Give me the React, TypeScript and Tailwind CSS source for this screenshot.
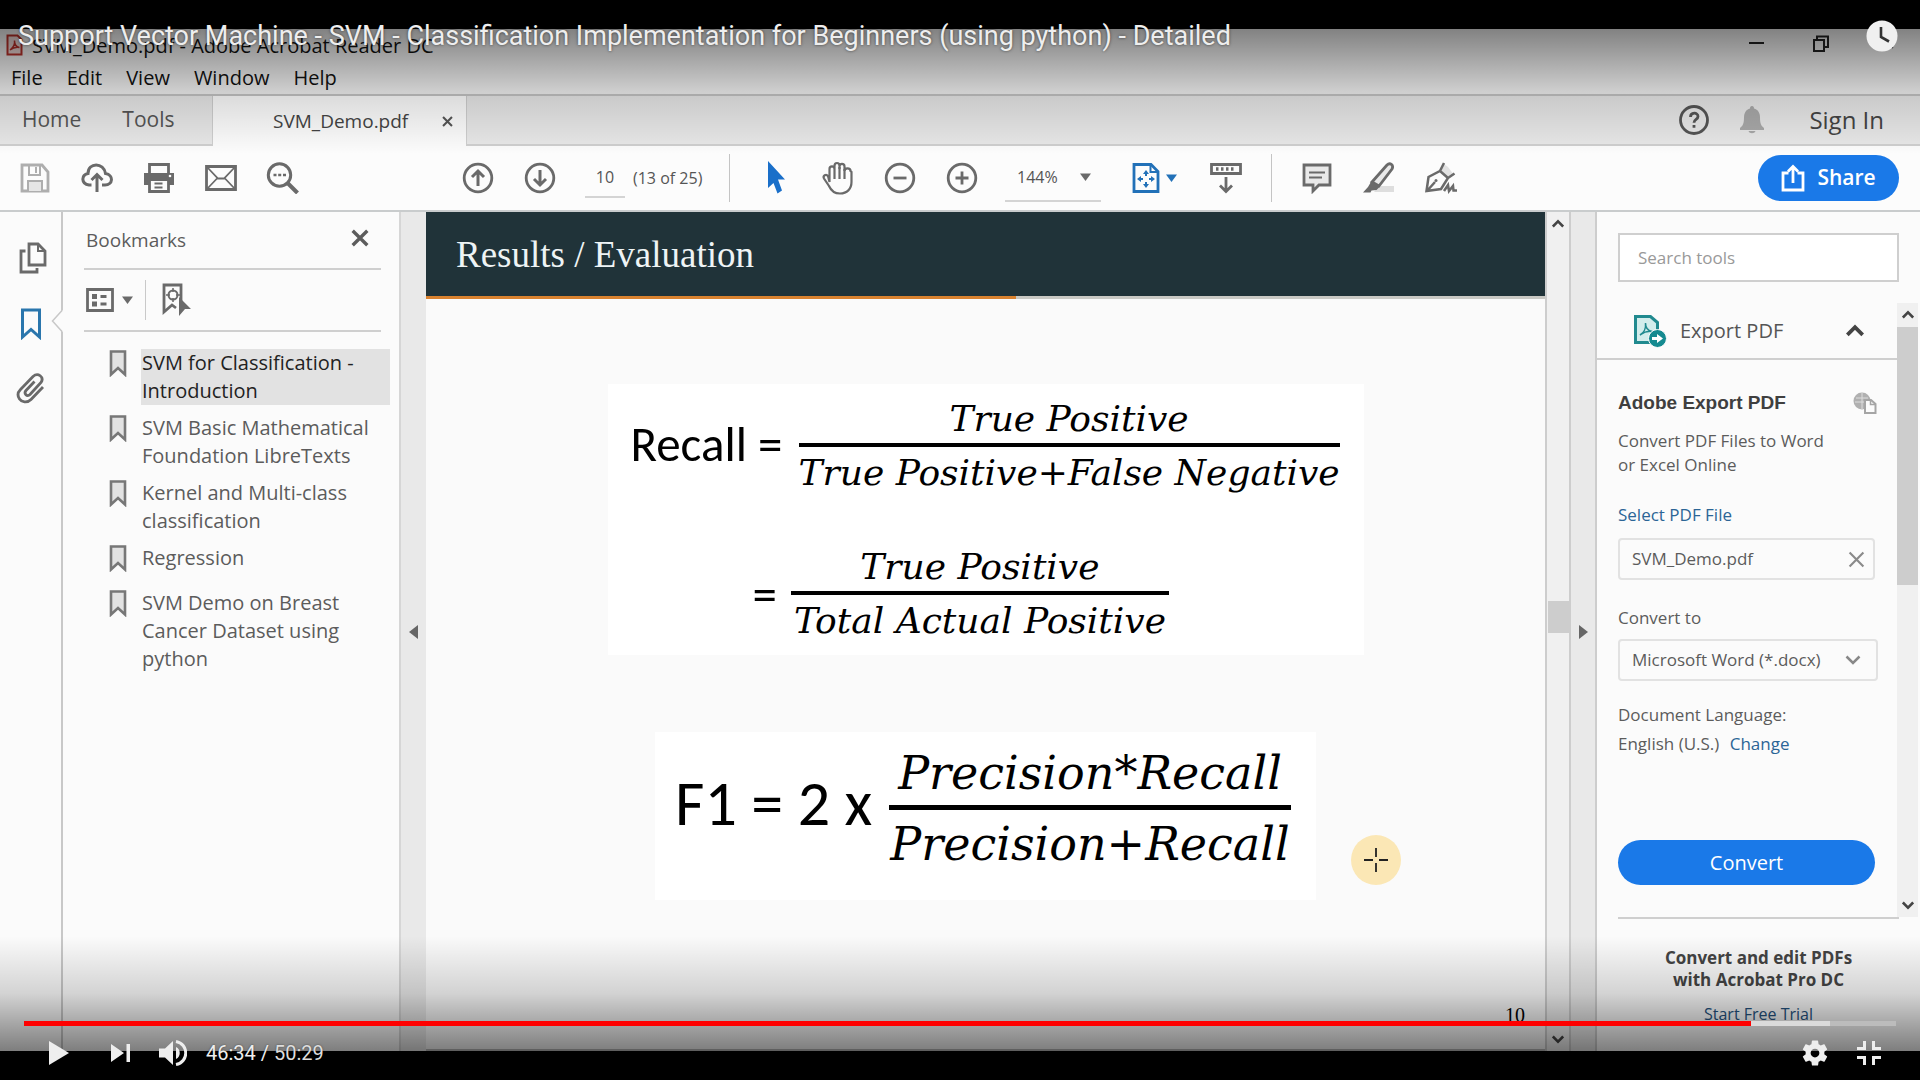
import React from "react";

type IconProps = { children: React.ReactNode; w?: number; h?: number; label?: string };

const Svg = ({ children, w = 30, h = 30 }: IconProps) => (
  <svg
    width={w}
    height={h}
    viewBox={`0 0 ${w} ${h}`}
    fill="none"
    stroke="currentColor"
    strokeWidth="2.8"
    className="shrink-0"
    aria-hidden="true"
  >
    {children}
  </svg>
);

const Tool = ({ children, label }: { children: React.ReactNode; label: string }) => (
  <button aria-label={label} className="flex h-12 w-[62px] shrink-0 items-center justify-center">
    {children}
  </button>
);

const Caret = () => (
  <svg width="11" height="8" viewBox="0 0 11 8" className="shrink-0" fill="currentColor" aria-hidden="true">
    <path d="M0 0.5h11L5.500 8z" />
  </svg>
);

const Chevron = ({ down = false, size = 14 }: { down?: boolean; size?: number }) => (
  <svg
    width={size}
    height={size}
    viewBox="0 0 14 12"
    fill="none"
    stroke="currentColor"
    strokeWidth="3"
    className="shrink-0"
    aria-hidden="true"
  >
    <path d={down ? "M1 3l6 6 6-6" : "M1 9l6-6 6 6"} />
  </svg>
);

const Cross = ({ size = 16, weight = 3 }: { size?: number; weight?: number }) => (
  <svg width={size} height={size} viewBox="0 0 16 16" stroke="currentColor" strokeWidth={weight} aria-hidden="true">
    <path d="M1.500 1.500l13 13M14.500 1.500l-13 13" />
  </svg>
);

const menus = ["File", "Edit", "View", "Window", "Help"];

const bookmarks = [
  { text: "SVM for Classification - Introduction", active: true },
  { text: "SVM Basic Mathematical Foundation LibreTexts" },
  { text: "Kernel and Multi-class classification" },
  { text: "Regression" },
  { text: "SVM Demo on Breast Cancer Dataset using python" },
];

function TitleBar() {
  return (
    <div className="bg-[#f0f0f0] text-[#111]">
      <div className="flex h-8 items-center pl-[6px]">
        <svg width="17" height="22" viewBox="0 0 17 22" fill="none" stroke="#b5302a" strokeWidth="2" aria-hidden="true">
          <path d="M1.500 1.500h10l4 4v15h-14z" fill="#e9d3d1" />
          <path d="M4 16c3-2 5-6 4.500-9.500 0 4 2 6.500 5 7-3-.5-7 .5-9.500 2.500z" strokeWidth="1.500" />
        </svg>
        <span className="ml-[9px] pt-[2px] text-[20px] leading-8">SVM_Demo.pdf - Adobe Acrobat Reader DC</span>
        <div className="ml-auto flex items-center gap-[49px] pr-[22px] pb-[4px]">
          <button aria-label="Minimize" className="h-[2px] w-[15px] bg-[#222]" />
          <button aria-label="Restore">
            <svg width="16" height="17" viewBox="0 0 16 17" fill="none" stroke="#222" strokeWidth="2" aria-hidden="true">
              <path d="M1 5h10v11H1zM4 5V1.500h11V12h-4" />
            </svg>
          </button>
          <button aria-label="Close" className="flex w-5 justify-center">
            <Cross size={12} weight={2} />
          </button>
        </div>
      </div>
      <nav className="flex h-[33px] items-center gap-6 pl-[11px] text-[20px] leading-8">
        {menus.map((m) => (
          <button key={m}>{m}</button>
        ))}
      </nav>
    </div>
  );
}

function Tabs() {
  return (
    <div className="flex h-[52px] items-stretch border-t-2 border-[#c4c4c4] bg-[#e8e8e8] text-[21px] text-[#555]">
      <div className="flex w-[213px] items-center gap-[41px] border-r border-b-2 border-[#cfcfcf] pl-[22px]">
        <button>Home</button>
        <button>Tools</button>
      </div>
      <div className="flex w-[253px] items-center bg-[#fcfcfc] pl-[60px]">
        <button className="w-[134px] text-[19px] text-[#444]">SVM_Demo.pdf</button>
        <button aria-label="Close tab" className="ml-[35px] text-[#555]">
          <Cross size={11} />
        </button>
      </div>
      <div className="flex flex-1 items-center justify-end border-b-2 border-l border-[#cfcfcf] pr-[36px]">
        <button aria-label="Help">
          <Svg w={32} h={32}>
            <circle cx="16" cy="16" r="13.500" />
            <path d="M12.500 13c0-5 7.500-5 7.500-.5 0 3-4 2.800-4 6.200M16 21v2.800" />
          </Svg>
        </button>
        <button aria-label="Notifications" className="ml-[29px] text-[#a9a9a9]">
          <svg width="26" height="28" viewBox="0 0 26 28" fill="currentColor" aria-hidden="true">
            <path d="M13 0c1.500 0 2 1 2 2.500 4 1 6 4.500 6 9 0 6 1 8 4 10.500V24H1v-2c3-2.500 4-4.500 4-10.500 0-4.500 2-8 6-9C11 1 11.500 0 13 0zM9.500 25h7c-1 3-6 3-7 0z" />
          </svg>
        </button>
        <button className="ml-[44px] text-[24px] text-[#444]">Sign In</button>
      </div>
    </div>
  );
}

function Toolbar() {
  return (
    <div className="flex h-[66px] items-center border-b-2 border-[#c9cccd] bg-[#fcfcfc] pr-[21px] pl-1 text-[#6a6a6a]">
      <div className="flex">
        <button
          aria-label="Save"
          className="flex h-12 w-[62px] shrink-0 items-center justify-center text-[#aeaeae]"
        >
          <Svg>
            <path d="M2 2h20l6 7v19H2z" />
            <path d="M9 2v10h11V2M16 4v6" strokeWidth="2" />
            <path d="M8 28V18h14v10" fill="#e6e6e6" strokeWidth="2" />
          </Svg>
        </button>
        <Tool label="Upload to cloud">
          <Svg w={32} h={32}>
            <path d="M10.500 23H8c-8-1-8-10-1-11.500C7 0 23 0 24.500 11.500 33 13 32 23 24 23h-3" strokeWidth="3" />
            <path d="M16 30V13M10.500 18l5.500-5.500 5.500 5.500" strokeWidth="3" />
          </Svg>
        </Tool>
        <Tool label="Print">
          <Svg w={32} h={30}>
            <path d="M6.500 11V1.500h19V11" />
            <path d="M1 10h30v12H1z" fill="currentColor" stroke="none" />
            <path d="M6.500 16.500h19v12h-19z" fill="#fcfcfc" />
            <path d="M11.500 20.500h8M11.500 24.500h8" strokeWidth="2" />
            <circle cx="27" cy="13" r="1.300" fill="#fff" stroke="none" />
          </Svg>
        </Tool>
        <Tool label="Email">
          <Svg w={32} h={26}>
            <path d="M1.500 1.500h29v23h-29z" />
            <path d="M2 2l11 11.500h6L30 2M2 24l10-10.500M30 24L20 13.500" strokeWidth="1.800" />
          </Svg>
        </Tool>
        <Tool label="Find">
          <Svg w={34} h={32}>
            <circle cx="13.500" cy="13" r="11.200" strokeWidth="3" />
            <path d="M21.500 21l10 10" strokeWidth="4" />
            <path d="M7.500 13h3M12.200 13h3M17 13h3" strokeWidth="2.600" />
          </Svg>
        </Tool>
      </div>
      <div className="ml-[133px] flex">
        <Tool label="Previous page">
          <Svg w={32} h={32}>
            <circle cx="16" cy="16" r="13.800" />
            <path d="M16 24V9M10 15l6-6 6 6" strokeWidth="3" />
          </Svg>
        </Tool>
        <Tool label="Next page">
          <Svg w={32} h={32}>
            <circle cx="16" cy="16" r="13.800" />
            <path d="M16 8v15M10 17l6 6 6-6" strokeWidth="3" />
          </Svg>
        </Tool>
      </div>
      <div className="ml-[14px] flex items-center text-[16px] text-[#555]">
        <input
          aria-label="Page number"
          defaultValue="10"
          className="h-10 w-10 border-b-2 border-[#d4d4d4] bg-transparent text-center outline-none"
        />
        <span className="ml-2 w-[70px] whitespace-nowrap">(13 of 25)</span>
      </div>
      <div className="ml-[26px] h-12 w-px shrink-0 bg-[#c4c4c4]" />
      <div className="ml-[15px] flex">
        <Tool label="Select">
          <svg width="20" height="34" viewBox="0 0 20 34" aria-hidden="true">
            <path d="M2 0l17 18.500h-7l4 11-4.500 3-4-10.500L2 27z" fill="#1a6fc9" />
          </svg>
        </Tool>
        <Tool label="Pan">
          <Svg w={34} h={34}>
            <path
              d="M8.500 21V8c0-3.500 5-3.500 5 0V5c0-4 5-4 5 0v3-2.500c0-3.500 5-3.500 5 0V10c0-3.500 6-3.500 6 0l1 1v10c0 7-4.500 11.500-11.500 11.500-6 0-9-3-11-7.500L3 17.500c-1.500-3 2-5 4-2.500z"
              strokeWidth="2.200"
            />
            <path d="M13.500 8v10M18.500 6v12M23.500 8v10" strokeWidth="2.200" />
          </Svg>
        </Tool>
        <Tool label="Zoom out">
          <Svg w={32} h={32}>
            <circle cx="16" cy="16" r="13.800" />
            <path d="M9.500 16h13" />
          </Svg>
        </Tool>
        <Tool label="Zoom in">
          <Svg w={32} h={32}>
            <circle cx="16" cy="16" r="13.800" />
            <path d="M9.500 16h13M16 9.500v13" />
          </Svg>
        </Tool>
      </div>
      <button className="ml-3 flex h-12 w-24 items-center border-b-2 border-[#d4d4d4] pl-3 text-[16px] text-[#555]">
        144%
        <span className="ml-auto pr-[10px] text-[#6a6a6a]">
          <Caret />
        </span>
      </button>
      <button aria-label="Fit page" className="ml-[31px] flex items-center gap-[6px] text-[#2271b8]">
        <Svg w={28} h={30}>
          <path d="M2 1.500h17l7 7v20H2z" />
          <path d="M18.500 2v7H26" strokeWidth="2" />
          <path d="M14 9v4M14 19v4M7 16h4M17 16h4" strokeWidth="2" />
          <path d="M14 7l3 4h-6zM14 25l3-4h-6zM5 16l4-3v6zM23 16l-4-3v6z" fill="currentColor" stroke="none" />
        </Svg>
        <Caret />
      </button>
      <div className="ml-[18px] flex">
        <Tool label="Scrolling">
          <Svg w={32} h={32}>
            <path d="M1.500 2.500h29v9h-29z" />
            <path d="M6 7h2.500M11 7h2.500M16 7h2.500M21 7h2.500" strokeWidth="3.500" />
            <path d="M16 15v14M10 23.500l6 6 6-6" />
          </Svg>
        </Tool>
      </div>
      <div className="ml-[14px] h-12 w-px shrink-0 bg-[#c4c4c4]" />
      <div className="ml-[14px] flex">
        <Tool label="Comment">
          <Svg w={30} h={32}>
            <path d="M2 3h26v20H17l-6 6v-6H2z" fill="#e9e9e9" />
            <path d="M7 10.500h16M7 15.500h13" strokeWidth="2" />
          </Svg>
        </Tool>
        <Tool label="Highlight">
          <Svg w={32} h={32}>
            <path d="M11 30h20v-6H16z" fill="#dedede" stroke="none" />
            <path d="M9 20L24 3c3-3 7 0 5 4L16 24z" fill="#e9e9e9" />
            <path d="M8.500 19l8 6-3 3-5 .500-1 2H0l5-5.500z" fill="currentColor" stroke="none" />
          </Svg>
        </Tool>
        <Tool label="Sign">
          <Svg w={34} h={32}>
            <path d="M20 2l-3 7 7 8 6-4-6-8z" fill="#e2e2e2" stroke="none" />
            <path d="M2.500 29L4.500 15 16 9l8 7-7 11zM3 29l8-9M20 1l-4 8 8 7 6.500-4.500" strokeWidth="2.500" />
            <circle cx="12" cy="18.500" r="1.500" fill="currentColor" stroke="none" />
            <path d="M20 29l4-6 1 6 4-5 .500 4.500H33" strokeWidth="2.500" />
          </Svg>
        </Tool>
      </div>
      <button className="ml-auto flex h-[46px] w-[141px] items-center justify-center gap-3 rounded-full bg-[#1a79e8] text-[21px] font-semibold text-white">
        <Svg w={24} h={28}>
          <path d="M7.500 9H2v17h20V9h-5.500M12 19V3M7 7.500l5-5 5 5" />
        </Svg>
        Share
      </button>
    </div>
  );
}

function BookmarkPanel() {
  return (
    <>
      <div className="relative flex w-[63px] shrink-0 flex-col items-start gap-8 border-r-2 border-[#c8c8c8] bg-[#fbfbfb] pt-[30px] pl-4 text-[#6a6a6a]">
        <button aria-label="Page thumbnails" className="ml-[3px]">
          <Svg w={28} h={32}>
            <path d="M10 2h9l7 7v14H10z" />
            <path d="M19 2v7h7" strokeWidth="2" />
            <path d="M6.500 9H2v21h16v-4" />
          </Svg>
        </button>
        <button aria-label="Bookmarks" className="ml-1 text-[#2a76ad]">
          <Svg w={22} h={34}>
            <path d="M2.500 4h17v27L11 23.500 2.500 31z" strokeWidth="3" />
          </Svg>
        </button>
        <button aria-label="Attachments">
          <Svg w={30} h={32}>
            <path d="M27 15L15 27.500c-4 4-9.500 2.500-11.500-.5s-2-6.500 1-9.500L17 4.500c5-4.500 11.500.5 8 6L14 22.500c-3 3-6.500-1-4-4l8.500-9" />
          </Svg>
        </button>
        <svg width="12" height="22" viewBox="0 0 12 22" className="absolute top-[98px] -right-[2px]" aria-hidden="true">
          <path d="M12 0L1.500 11 12 22z" fill="#fbfbfb" />
          <path d="M11 0.500L1.500 11 11 21.500" fill="none" stroke="#c8c8c8" strokeWidth="1.500" />
        </svg>
      </div>
      <aside className="w-[336px] shrink-0 bg-[#fbfbfb] pr-[18px] pl-[21px] text-[#5c5c5c]">
        <div className="flex h-[58px] items-center justify-between border-b-2 border-[#cfcfcf] pr-3 pl-[2px]">
          <h2 className="text-[19px]">Bookmarks</h2>
          <button aria-label="Close bookmarks" className="pb-1">
            <Cross size={18} />
          </button>
        </div>
        <div className="flex h-[62px] items-center border-b-2 border-[#cfcfcf] pl-[2px] text-[#6a6a6a]">
          <button aria-label="Options" className="flex items-center gap-2">
            <Svg w={28} h={24}>
              <path d="M1.500 1.500h25v21h-25z" />
              <path d="M14.500 8.500h6M14.500 16h6" />
              <path d="M6 8.500h5M6 16h5" strokeWidth="5" />
            </Svg>
            <Caret />
          </button>
          <div className="ml-3 h-10 w-px bg-[#c9c9c9]" />
          <button aria-label="Find current bookmark" className="ml-4">
            <Svg w={30} h={34}>
              <path d="M19 20V2H2v27l8-7 4 3" />
              <circle cx="11" cy="12" r="4.500" strokeWidth="2" />
              <path d="M11 5v4M11 15v4M4 12h4M14 12h4" strokeWidth="1.500" />
              <path d="M17 14l12 12h-6l-6 7z" fill="currentColor" stroke="none" />
            </Svg>
          </button>
        </div>
        <ul className="-mr-[9px] flex flex-col gap-[9px] pt-[17px] pl-[25px] text-[20px] leading-7">
          {bookmarks.map((b) => (
            <li key={b.text} className="flex min-h-9 items-start gap-[14px]">
              <svg
                width="18"
                height="28"
                viewBox="0 0 18 28"
                fill="#e2e2e2"
                stroke="#777"
                strokeWidth="2.600"
                className="shrink-0"
                aria-hidden="true"
              >
                <path d="M2 2.500h14v23l-7-6.500-7 6.500z" />
              </svg>
              <a
                href="#page"
                className={b.active ? "flex-1 bg-[#e2e2e2] pr-[14px] pl-[1px] text-[#222]" : "flex-1 pr-[14px] pl-[1px]"}
              >
                {b.text}
              </a>
            </li>
          ))}
        </ul>
      </aside>
    </>
  );
}

const Fraction = ({ top, bottom, large = false }: { top: string; bottom: string; large?: boolean }) => (
  <div
    className={
      large
        ? "flex w-[402px] flex-col items-center font-['DejaVu_Serif',serif] text-[46px] leading-[56px] whitespace-nowrap italic"
        : "flex min-w-[378px] flex-col items-center font-['DejaVu_Serif',serif] text-[36px] leading-[48px] whitespace-nowrap italic"
    }
  >
    <span>{top}</span>
    <span className={large ? "mt-1 mb-[6px] h-[5px] w-full bg-black" : "mb-[2px] h-1 w-full bg-black"} />
    <span>{bottom}</span>
  </div>
);

function Slide() {
  return (
    <main className="relative flex min-w-0 flex-1 flex-col items-center border-b-2 border-[#bbb] bg-[#fafafa] text-black">
      <header className="w-full">
        <h1 className="flex h-[84px] items-center bg-[#203339] pt-[2px] pl-[30px] font-['Liberation_Serif',serif] text-[37px] text-[#eef4f5]">
          Results / Evaluation
        </h1>
        <div className="h-[3px] bg-[#c9c9c4]">
          <div className="h-full w-[590px] bg-[#d9822f]" />
        </div>
      </header>
      <section className="mt-[85px] flex h-[271px] w-[756px] shrink-0 flex-col gap-[46px] bg-white pt-[11px] pl-[23px] font-[Calibri,Carlito,Lato,sans-serif] text-[49px] leading-[48px]">
        <div className="flex items-center gap-[14px]">
          <span className="w-[154px] pb-1 whitespace-nowrap">Recall =</span>
          <Fraction top="True Positive" bottom="True Positive+False Negative" />
        </div>
        <div className="flex items-center gap-[14px] pl-[122px]">
          <span>=</span>
          <Fraction top="True Positive" bottom="Total Actual Positive" />
        </div>
      </section>
      <section className="mt-[77px] flex h-[168px] w-[661px] shrink-0 items-start gap-[11px] bg-white pt-[13px] pl-[20px] font-[Calibri,Carlito,Lato,sans-serif] text-[64px]">
        <span className="w-[203px] pt-[6px] leading-[105px] whitespace-nowrap">F1 = 2 x</span>
        <Fraction large top="Precision*Recall" bottom="Precision+Recall" />
      </section>
      <span className="mt-auto mr-5 mb-[22px] self-end font-['Liberation_Serif',serif] text-[20px] leading-6">10</span>
      <svg width="52" height="52" viewBox="0 0 52 52" className="absolute top-[622px] left-[924px]" aria-hidden="true">
        <circle cx="26" cy="26" r="25" fill="#fbe7b5" />
        <path d="M26 14v9M26 29v9M14 26h9M29 26h9" stroke="#222" strokeWidth="1.800" />
      </svg>
    </main>
  );
}

function ScrollBars() {
  return (
    <>
      <div className="flex w-[26px] shrink-0 flex-col items-center border-x-2 border-[#cdcdcd] bg-[#f0f0f0] py-[6px] text-[#444]">
        <Chevron size={12} />
        <div className="grow-[372]" />
        <div className="h-8 w-[21px] bg-[#cdcdcd]" />
        <div className="grow-[402]" />
        <Chevron down size={12} />
      </div>
      <div className="flex w-[26px] shrink-0 items-center justify-center border-r-2 border-[#cdcdcd] bg-[#e9e9e9]">
        <button aria-label="Collapse tools pane">
          <svg width="9" height="14" viewBox="0 0 9 14" fill="#666" aria-hidden="true">
            <path d="M0 0v14l9-7z" />
          </svg>
        </button>
      </div>
    </>
  );
}

function ToolsPane() {
  return (
    <aside className="flex w-[323px] shrink-0 flex-col bg-[#fbfbfb] pt-[21px] text-[17px] text-[#5c5c5c]">
      <input
        aria-label="Search tools"
        placeholder="Search tools"
        className="mr-[21px] ml-[21px] h-[49px] border-2 border-[#cfcfcf] bg-white px-[18px] outline-none placeholder:text-[#999]"
      />
      <div className="mt-[21px] flex h-[614px] shrink-0">
        <div className="min-w-0 flex-1">
          <button className="flex h-[57px] w-full items-center border-b-2 border-[#cfcfcf] pr-[33px] pl-[36px] text-[20px] text-[#555]">
            <svg width="34" height="34" viewBox="0 0 34 34" fill="none" stroke="#218a8f" strokeWidth="3" aria-hidden="true">
              <path d="M2.500 2.500h15l7 6v20h-22z" fill="#d3edec" />
              <path d="M7 21c4-2 6-7 5.500-12 0 5 3 8 7 8.500-4-.5-9 1-12.500 3.500z" strokeWidth="1.500" />
              <circle cx="24.500" cy="24.500" r="9" fill="#158a90" stroke="#fbfbfb" strokeWidth="1" />
              <path d="M19 24.500h6" stroke="#fff" />
              <path d="M24 20l6 4.500-6 4.500z" fill="#fff" stroke="none" />
            </svg>
            <span className="ml-[13px]">Export PDF</span>
            <span className="ml-auto text-[#444]">
              <Chevron size={18} />
            </span>
          </button>
          <div className="pr-[20px] pl-[21px]">
            <div className="mt-[31px] flex h-6 items-center justify-between">
              <h2 className="font-['Liberation_Sans',sans-serif] text-[19px] font-bold text-[#3f3f3f]">Adobe Export PDF</h2>
              <svg width="24" height="22" viewBox="0 0 24 22" aria-hidden="true">
                <circle cx="9" cy="9" r="8.500" fill="#b0b0b0" />
                <path d="M3 6h12M2 10h10M9 1v16" stroke="#ddd" />
                <path d="M12 8h6l4.500 4v9H12z" fill="#fbfbfb" stroke="#a5a5a5" strokeWidth="2" />
                <path d="M17.500 8v4.500h5" fill="none" stroke="#a5a5a5" strokeWidth="1.500" />
              </svg>
            </div>
            <p className="mt-[14px] w-[220px] leading-6">Convert PDF Files to Word or Excel Online</p>
            <a href="#select" className="mt-[26px] block leading-6 text-[#2b6596]">
              Select PDF File
            </a>
            <div className="mt-[11px] flex h-[42px] w-[257px] items-center justify-between rounded border-2 border-[#e2e2e2] px-3">
              <span>SVM_Demo.pdf</span>
              <button aria-label="Remove file" className="mr-[-4px] text-[#8a8a8a]">
                <Cross size={17} weight={2} />
              </button>
            </div>
            <label htmlFor="format" className="mt-[26px] block leading-6">
              Convert to
            </label>
            <div className="relative mt-[9px] flex h-[42px] w-[260px] items-center">
              <select
                id="format"
                className="h-full w-full appearance-none rounded border-2 border-[#e2e2e2] bg-transparent pr-8 pl-3"
              >
                <option>Microsoft Word (*.docx)</option>
              </select>
              <svg
                width="16"
                height="10"
                viewBox="0 0 16 10"
                className="pointer-events-none absolute right-[17px]"
                fill="none"
                stroke="#888"
                strokeWidth="2.500"
                aria-hidden="true"
              >
                <path d="M1.500 1.500L8 8l6.500-6.500" />
              </svg>
            </div>
            <p className="mt-[19px] leading-[29px]">Document Language:</p>
            <p className="leading-[29px]">
              English (U.S.){" "}
              <a href="#language" className="ml-[6px] text-[#2b6596]">
                Change
              </a>
            </p>
            <button className="mt-[82px] h-[45px] w-[257px] rounded-full bg-[#1a79e8] text-[20px] text-white">
              Convert
            </button>
          </div>
        </div>
        <div className="mr-[2px] flex w-[21px] shrink-0 flex-col items-center bg-[#f0f0f0] py-[6px] text-[#444]">
          <Chevron size={12} />
          <div className="mt-[6px] h-[258px] w-full bg-[#cdcdcd]" />
          <div className="mt-auto flex">
            <Chevron down size={12} />
          </div>
        </div>
      </div>
      <div className="mr-[21px] ml-[21px] border-t-2 border-[#cfcfcf] pt-[28px] text-center">
        <p className="font-bold leading-[22px] text-[#444]">
          Convert and edit PDFs
          <br />
          with Acrobat Pro DC
        </p>
        <a href="#trial" className="mt-[11px] block text-[16px] leading-6 text-[#24527f]">
          Start Free Trial
        </a>
      </div>
    </aside>
  );
}

function PlayerOverlay() {
  return (
    <div className="pointer-events-none absolute inset-0 flex flex-col font-[Roboto,sans-serif] text-[#eee]">
      <div className="flex items-start justify-between px-[18px] pt-[18px] pr-[22px]">
        <h1 className="text-[27px] leading-9 whitespace-nowrap [text-shadow:0_0_3px_rgba(0,0,0,0.6)]">
          Support Vector Machine - SVM - Classification Implementation for Beginners (using python) - Detailed
        </h1>
        <button aria-label="Watch later" className="pt-[2px]">
          <svg width="32" height="32" viewBox="0 0 32 32" aria-hidden="true">
            <circle cx="16" cy="16" r="15.500" fill="#f0f0f0" />
            <path d="M15 7v10l8 4.500" fill="none" stroke="#333" strokeWidth="2.600" />
          </svg>
        </button>
      </div>
      <div className="mx-6 mt-auto flex h-[5px] bg-[#bcbcbc]">
        <div className="w-[92.260%] bg-[#f00]" />
        <div className="w-[4.240%] bg-[#dadada]" />
      </div>
      <div className="flex h-[54px] items-center pr-[32px] pl-[39px]">
        <button aria-label="Play" className="ml-[10px]">
          <svg width="20" height="24" viewBox="0 0 20 24" fill="currentColor" aria-hidden="true">
            <path d="M0 0l20 12L0 24z" />
          </svg>
        </button>
        <button aria-label="Next" className="ml-[42px]">
          <svg width="19" height="18" viewBox="0 0 19 18" fill="currentColor" aria-hidden="true">
            <path d="M0 0l13 9-13 9zM15.500 0H19v18h-3.500z" />
          </svg>
        </button>
        <button aria-label="Mute" className="ml-[29px]">
          <svg width="28" height="28" viewBox="0 0 28 28" fill="currentColor" aria-hidden="true">
            <path d="M0 9.500h6L14 2v24l-8-7.500H0zM17 8c5 2 5 10 0 12z" />
            <path d="M17 2.500c13 2.500 13 20.500 0 23" fill="none" stroke="currentColor" strokeWidth="3" />
          </svg>
        </button>
        <span className="ml-[19px] text-[20px] leading-6 [text-shadow:0_0_2px_rgba(0,0,0,0.5)]">
          46:34 / <span className="text-[#ddd]">50:29</span>
        </span>
        <button aria-label="Settings" className="ml-auto">
          <svg width="30" height="30" viewBox="0 0 24 24" fill="currentColor" aria-hidden="true">
            <path d="M19.430 12.980c.04-.32.07-.64.07-.98s-.03-.66-.07-.98l2.110-1.650c.19-.15.24-.42.12-.64l-2-3.460c-.12-.22-.39-.3-.61-.22l-2.490 1c-.52-.4-1.080-.73-1.690-.98l-.38-2.650C14.460 2.180 14.250 2 14 2h-4c-.25 0-.46.18-.49.42l-.38 2.650c-.61.25-1.170.59-1.690.98l-2.490-1c-.23-.09-.49 0-.61.22l-2 3.460c-.13.22-.07.49.12.64l2.110 1.650c-.04.32-.07.65-.07.98s.03.66.07.98l-2.110 1.650c-.19.15-.24.42-.12.64l2 3.460c.12.22.39.3.61.22l2.490-1c.52.4 1.080.73 1.690.98l.38 2.650c.03.24.24.42.49.42h4c.25 0 .46-.18.49-.42l.38-2.650c.61-.25 1.170-.59 1.690-.98l2.490 1c.23.09.49 0 .61-.22l2-3.460c.12-.22.07-.49-.12-.64l-2.110-1.650zM12 15.500c-1.930 0-3.500-1.570-3.500-3.500s1.570-3.500 3.500-3.500 3.500 1.570 3.500 3.500-1.570 3.500-3.500 3.500z" />
          </svg>
        </button>
        <button aria-label="Exit full screen" className="mr-[7px] ml-[27px]">
          <svg width="24" height="24" viewBox="0 0 24 24" fill="none" stroke="currentColor" strokeWidth="3" aria-hidden="true">
            <path d="M0 7.500h7.500V0M16.500 0v7.500H24M0 16.500h7.500V24M16.500 24v-7.500H24" />
          </svg>
        </button>
      </div>
    </div>
  );
}

export default function App() {
  return (
    <div className="relative h-screen min-h-[1080px] bg-black py-[29px] font-['Open_Sans',sans-serif]">
      <div className="relative flex h-full flex-col overflow-hidden bg-[#fbfbfb]">
        <TitleBar />
        <Tabs />
        <Toolbar />
        <div className="flex min-h-0 flex-1">
          <BookmarkPanel />
          <div className="flex w-[27px] shrink-0 items-center justify-center border-l-2 border-[#d6d6d6] bg-[#e9e9e9]">
            <button aria-label="Collapse bookmarks">
              <svg width="9" height="14" viewBox="0 0 9 14" fill="#666" aria-hidden="true">
                <path d="M9 0v14L0 7z" />
              </svg>
            </button>
          </div>
          <Slide />
          <ScrollBars />
          <ToolsPane />
        </div>
        <div className="pointer-events-none absolute inset-x-0 top-0 h-[125px] bg-linear-to-b from-black/46 via-black/14 to-transparent" />
        <div className="pointer-events-none absolute inset-x-0 bottom-0 h-[115px] bg-linear-to-t from-black/50 via-black/16 to-transparent" />
      </div>
      <PlayerOverlay />
    </div>
  );
}
